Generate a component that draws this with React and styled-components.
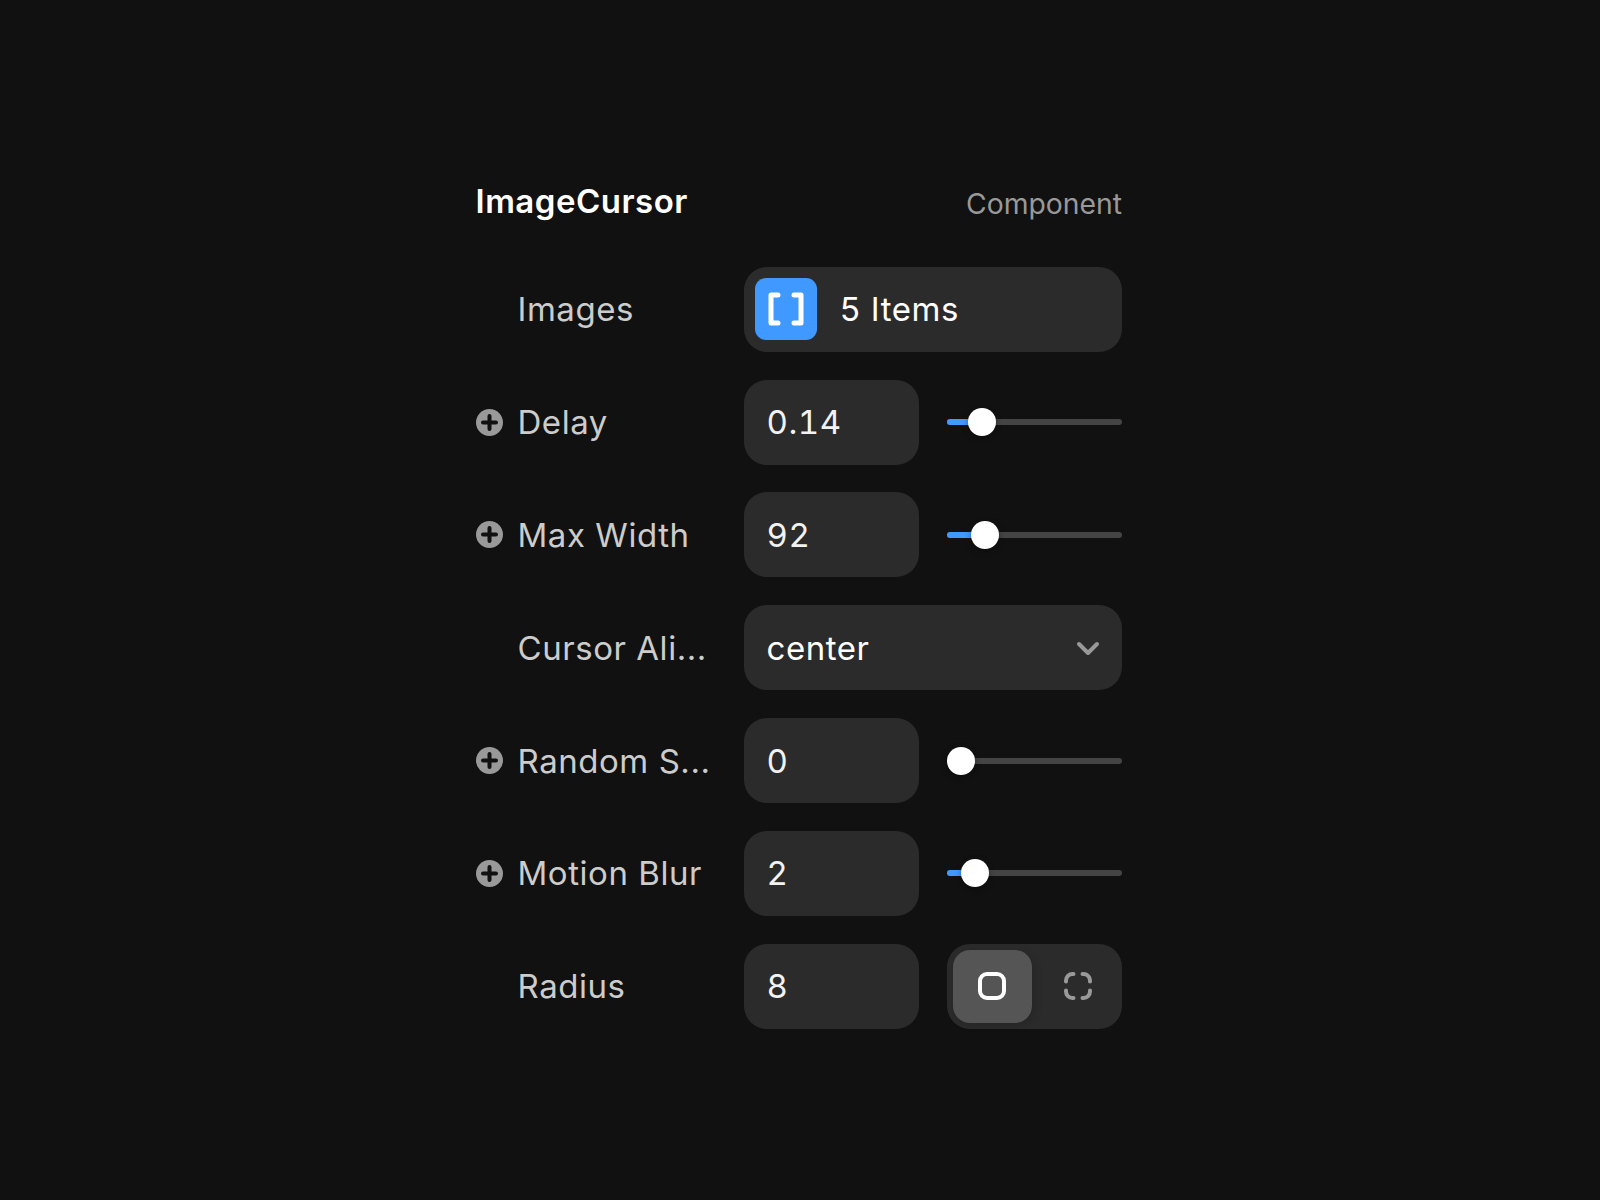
import React from "react";
import styled, { createGlobalStyle } from "styled-components";

const Global = createGlobalStyle`
  html, body { margin: 0; padding: 0; background: #111111; }
  body { font-family: Inter, "Liberation Sans", sans-serif; -webkit-font-smoothing: antialiased; }
`;

const Page = styled.div`
  width: 1600px;
  height: 1200px;
  background: #111111;
  padding: 182px 0 0 475.5px;
  box-sizing: border-box;
`;

const Panel = styled.div`
  width: 646.5px;
  display: flex;
  flex-direction: column;
  gap: 27.83px;
`;

const Header = styled.div`
  display: flex;
  justify-content: space-between;
  align-items: center;
  height: 38px;
  margin-bottom: 19px;
`;

const Title = styled.div`
  font-size: 33px;
  font-weight: 570;
  letter-spacing: 0.5px;
  color: #ffffff;
`;

const Kind = styled.div`
  font-size: 28.3px;
  font-weight: 400;
  color: #999999;
  position: relative;
  top: 3px;
`;

const Row = styled.div`
  display: grid;
  grid-template-columns: 268px 175px 203.5px;
  height: 85px;
  align-items: center;
`;

const Label = styled.div`
  display: flex;
  align-items: center;
  gap: 15px;
  padding-left: ${(p) => (p.$plus ? 0 : 42)}px;
  font-size: 33px;
  font-weight: 430;
  letter-spacing: 0.55px;
  color: #cccccc;
  white-space: nowrap;
`;

const PlusIcon = styled.svg`
  width: 27px;
  height: 27px;
  flex: none;
`;

const Field = styled.div`
  height: 85px;
  box-sizing: border-box;
  background: #2b2b2b;
  border-radius: 23px;
  display: flex;
  align-items: center;
  padding: 0 23px;
  font-size: 33px;
  font-weight: 430;
  letter-spacing: 0.55px;
  font-variant-numeric: tabular-nums;
  color: #f2f2f2;
  grid-column: ${(p) => (p.$wide ? "2 / 4" : "auto")};
`;

const ImagesField = styled(Field)`
  padding: 0 11px;
  gap: 23px;
  color: #ffffff;
`;

const ArrayBadge = styled.div`
  width: 62px;
  height: 62px;
  border-radius: 11px;
  background: #4099ff;
  display: flex;
  align-items: center;
  justify-content: center;
`;

const SelectField = styled(Field)`
  justify-content: space-between;
  padding-right: 22px;
  color: #ffffff;
`;

const SliderWrap = styled.div`
  position: relative;
  height: 28px;
  margin-left: 28px;
  width: 175.5px;
  display: flex;
  align-items: center;
`;

const Track = styled.div`
  width: 100%;
  height: 6px;
  border-radius: 3px;
  background: #444444;
  overflow: hidden;
`;

const Fill = styled.div`
  height: 100%;
  background: #4099ff;
`;

const Thumb = styled.div`
  position: absolute;
  top: 0;
  width: 28px;
  height: 28px;
  border-radius: 50%;
  background: #ffffff;
  box-shadow: 0 2px 6px rgba(0, 0, 0, 0.35);
`;

const Segment = styled.div`
  margin-left: 28px;
  width: 175.5px;
  height: 85px;
  box-sizing: border-box;
  background: #2b2b2b;
  border-radius: 23px;
  padding: 6px;
  display: grid;
  grid-template-columns: 79px 1fr;
  column-gap: 8px;
`;

const SegButton = styled.div`
  border-radius: 17px;
  background: ${(p) => (p.$active ? "#555555" : "transparent")};
  box-shadow: ${(p) => (p.$active ? "2px 2px 8px rgba(0,0,0,0.15)" : "none")};
  display: flex;
  align-items: center;
  justify-content: center;
  height: 73px;
`;

const Plus = () => (
  <PlusIcon viewBox="0 0 27 27">
    <circle cx="13.5" cy="13.5" r="13.5" fill="#999999" />
    <path d="M13.5 7v13M7 13.5h13" stroke="#111111" strokeWidth="4" strokeLinecap="round" />
  </PlusIcon>
);

const Slider = ({ center }) => {
  const left = center - 947;
  return (
    <SliderWrap>
      <Track>
        <Fill style={{ width: left }} />
      </Track>
      <Thumb style={{ left: left - 14 }} />
    </SliderWrap>
  );
};

const NumberRow = ({ label, value, center }) => (
  <Row>
    <Label $plus>
      <Plus />
      {label}
    </Label>
    <Field>{value}</Field>
    <Slider center={center} />
  </Row>
);

export default function App() {
  return (
    <Page>
      <Global />
      <Panel>
        <Header>
          <Title>ImageCursor</Title>
          <Kind>Component</Kind>
        </Header>
        <Row>
          <Label>Images</Label>
          <ImagesField $wide>
            <ArrayBadge>
              <svg width="36" height="34" viewBox="0 0 36 34" fill="none" stroke="#fff" strokeWidth="5" strokeLinecap="round" strokeLinejoin="round">
                <path d="M10 3H3v28h7M26 3h7v28h-7" />
              </svg>
            </ArrayBadge>
            5 Items
          </ImagesField>
        </Row>
        <NumberRow label="Delay" value="0.14" center={982} />
        <NumberRow label="Max Width" value="92" center={985} />
        <Row>
          <Label>Cursor Ali...</Label>
          <SelectField $wide>
            center
            <svg width="24" height="16" viewBox="0 0 24 16" fill="none" stroke="#999999" strokeWidth="4" strokeLinecap="round" strokeLinejoin="round">
              <path d="M3 4l9 9 9-9" />
            </svg>
          </SelectField>
        </Row>
        <NumberRow label="Random S..." value="0" center={961} />
        <NumberRow label="Motion Blur" value="2" center={975} />
        <Row>
          <Label>Radius</Label>
          <Field>8</Field>
          <Segment>
            <SegButton $active>
              <svg width="28" height="28" viewBox="0 0 28 28" fill="none" stroke="#fff" strokeWidth="4">
                <rect x="2" y="2" width="24" height="24" rx="7" />
              </svg>
            </SegButton>
            <SegButton>
              <svg width="28" height="28" viewBox="0 0 28 28" fill="none" stroke="#999999" strokeWidth="4" strokeLinecap="round">
                <path d="M2 9.5V8.5A6.5 6.5 0 0 1 8.5 2H9.5M18.5 2H19.5A6.5 6.5 0 0 1 26 8.5V9.5M26 18.5V19.5A6.5 6.5 0 0 1 19.5 26H18.5M9.5 26H8.5A6.5 6.5 0 0 1 2 19.5V18.5" />
              </svg>
            </SegButton>
          </Segment>
        </Row>
      </Panel>
    </Page>
  );
}
